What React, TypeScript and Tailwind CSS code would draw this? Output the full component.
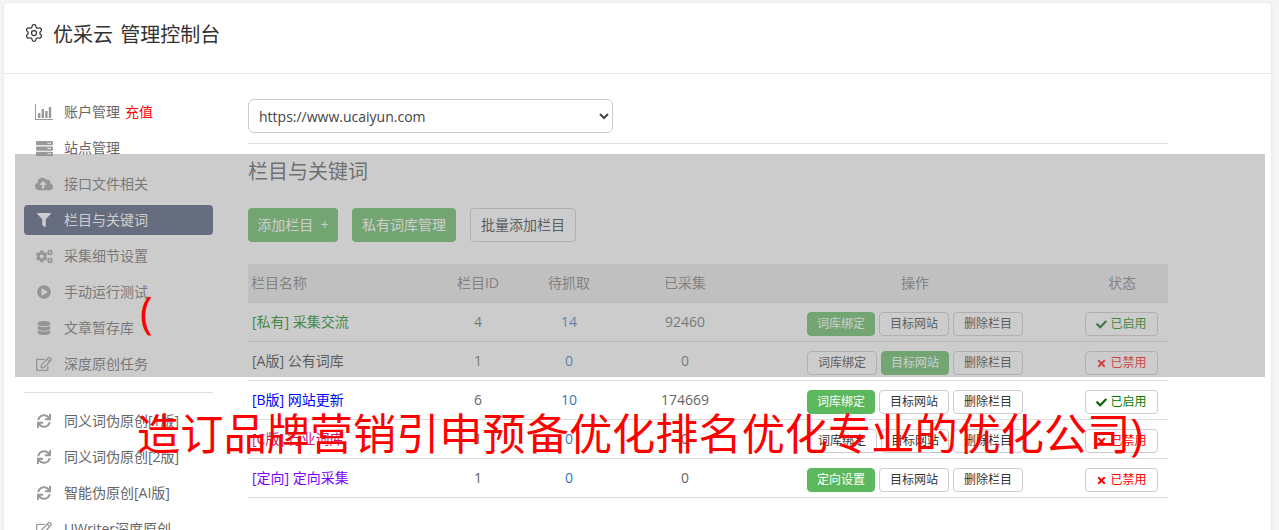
import { Settings } from "lucide-react";
import {
  FaServer, FaCloudUploadAlt, FaFilter, FaCogs, FaPlayCircle,
  FaDatabase, FaRegEdit, FaSync, FaCheck, FaTimes,
} from "react-icons/fa";

const cjk = "font-['Open_Sans','Noto_Sans_CJK_SC',sans-serif]";

function BarChartIcon() {
  return (
    <svg width="18" height="16" viewBox="0 0 18 16" fill="currentColor">
      <path d="M0 0h1v15h17v1H0z" />
      <rect x="3" y="9" width="2.4" height="5" />
      <rect x="6.6" y="5" width="2.4" height="9" />
      <rect x="10.2" y="7" width="2.4" height="7" />
      <rect x="13.8" y="3" width="2.4" height="11" />
    </svg>
  );
}

const NavA = [
  { icon: <BarChartIcon />, label: "账户管理", extra: "充值" },
  { icon: <FaServer className="text-[17px]" />, label: "站点管理" },
  { icon: <FaCloudUploadAlt className="text-[18px]" />, label: "接口文件相关" },
  { icon: <FaFilter className="text-[14px]" />, label: "栏目与关键词", active: true },
  { icon: <FaCogs className="text-[17px]" />, label: "采集细节设置" },
  { icon: <FaPlayCircle className="text-[14px]" />, label: "手动运行测试" },
  { icon: <FaDatabase className="text-[14px]" />, label: "文章暂存库" },
  { icon: <FaRegEdit className="text-[16px]" />, label: "深度原创任务" },
];
const NavB = [
  { icon: <FaSync className="text-[14px]" />, label: "同义词伪原创[1版]" },
  { icon: <FaSync className="text-[14px]" />, label: "同义词伪原创[2版]" },
  { icon: <FaSync className="text-[14px]" />, label: "智能伪原创[AI版]" },
  { icon: <FaRegEdit className="text-[16px]" />, label: "UWriter深度原创" },
];

function NavItem({ icon, label, extra, active }: { icon: React.ReactNode; label: string; extra?: string; active?: boolean }) {
  return (
    <div className={`flex h-[30px] items-center rounded-[4px] text-sm ${active ? "bg-[#43516f] text-white" : "text-[#666]"}`}>
      <span className={`flex w-10 shrink-0 justify-center ${active ? "text-white" : "text-[#999]"}`}>{icon}</span>
      <span>{label}</span>
      {extra && <span className="ml-[5px] text-[#f00]">{extra}</span>}
    </div>
  );
}

function Btn({ children, kind, w }: { children: React.ReactNode; kind: "green" | "plain"; w: string }) {
  return (
    <span className={`flex h-6 items-center justify-center rounded-[4px] border text-[12px] ${w} ${kind === "green" ? "border-[#5cb85c] bg-[#5cb85c] text-white" : "border-[#ccc] bg-white text-[#333]"}`}>
      {children}
    </span>
  );
}

const rows = [
  { tag: "[私有]", name: "采集交流", color: "text-[#008000]", id: "4", wait: "14", done: "92460", first: "词库绑定", mode: "first", on: true },
  { tag: "[A版]", name: "公有词库", color: "text-[#333]", id: "1", wait: "0", done: "0", first: "词库绑定", mode: "second", on: false },
  { tag: "[B版]", name: "网站更新", color: "text-[#0000ff]", id: "6", wait: "10", done: "174669", first: "词库绑定", mode: "first", on: true },
  { tag: "[C版]", name: "行业词库", color: "text-[#c71585]", id: "1", wait: "0", done: "0", first: "词库绑定", mode: "none", on: false },
  { tag: "[定向]", name: "定向采集", color: "text-[#8000ff]", id: "1", wait: "0", done: "0", first: "定向设置", mode: "first", on: false },
];

const cell = "border-b border-[#ddd]";

export default function App() {
  return (
    <div className={`relative h-[530px] w-[1279px] overflow-hidden bg-[#f5f5f5] ${cjk}`}>
      <div className="ml-[4px] mt-[3px] h-[600px] w-[1267px] rounded-t-[4px] bg-white shadow-[0_0_3px_#ddd]">
        <header className="flex h-[71px] items-center border-b border-[#e7e7e7] pb-[10px] pl-5 text-[#333]">
          <Settings size={20} strokeWidth={1.5} className="mr-[9px]" />
          <span className="mt-[3px] text-[20px] leading-[28px] [word-spacing:2px]">优采云 管理控制台</span>
        </header>
        <div className="flex pt-[23px]">
          <aside className="ml-5 w-[189px] shrink-0">
            <div className="flex flex-col gap-[6px]">
              {NavA.map((n) => <NavItem key={n.label} {...n} />)}
            </div>
            <div className="my-[13px] border-t border-[#ddd]" />
            <div className="flex flex-col gap-[6px]">
              {NavB.map((n) => <NavItem key={n.label} {...n} />)}
            </div>
          </aside>
          <main className="ml-[35px] w-[920px] shrink-0 pt-[2px]">
            <select className="block h-[34px] w-[365px] rounded-[6px] border border-[#ccc] bg-white px-[6px] text-sm text-[#444]">
              <option>https://www.ucaiyun.com</option>
            </select>
            <div className="mt-[10px] border-t border-[#ddd]" />
            <h2 className="mt-[14px] text-[20px] leading-[28px] text-[#555]">栏目与关键词</h2>
            <div className="mt-[22px] flex gap-[14px] text-sm">
              <span className="flex h-[34px] w-[90px] items-center justify-center rounded-[4px] bg-[#5cb85c] text-white [word-spacing:4px]">添加栏目 +</span>
              <span className="flex h-[34px] w-[104px] items-center justify-center rounded-[4px] bg-[#5cb85c] text-white">私有词库管理</span>
              <span className="flex h-[34px] w-[106px] items-center justify-center rounded-[4px] border border-[#ccc] text-[#333]">批量添加栏目</span>
            </div>
            <table className="mt-[22px] w-[920px] table-fixed border-separate border-spacing-0 text-sm text-[#666]">
              <thead>
                <tr className="h-[39px] bg-[#e9e9e9] text-[#777]">
                  <th className={`w-[186px] pl-[3px] text-left font-normal ${cell}`}>栏目名称</th>
                  <th className={`w-[88px] font-normal ${cell}`}>栏目ID</th>
                  <th className={`w-[94px] font-normal ${cell}`}>待抓取</th>
                  <th className={`w-[138px] font-normal ${cell}`}>已采集</th>
                  <th className={`w-[322px] font-normal ${cell}`}>操作</th>
                  <th className={`w-[92px] font-normal ${cell}`}>状态</th>
                </tr>
              </thead>
              <tbody>
                {rows.map((r) => (
                  <tr key={r.tag} className="h-[39px]">
                    <td className={`pl-[4px] ${r.color} ${cell}`}>{r.tag} {r.name}</td>
                    <td className={`text-center ${cell}`}>{r.id}</td>
                    <td className={`text-center text-[#337ab7] ${cell}`}>{r.wait}</td>
                    <td className={`text-center ${cell}`}>{r.done}</td>
                    <td className={`pt-[4px] ${cell}`}>
                      <div className="flex justify-center gap-1">
                        <Btn kind={r.mode === "first" ? "green" : "plain"} w={r.mode === "first" ? "w-[68px]" : "w-[70px]"}>{r.first}</Btn>
                        <Btn kind={r.mode === "second" ? "green" : "plain"} w={r.mode === "first" ? "w-[70px]" : "w-[68px]"}>目标网站</Btn>
                        <Btn kind="plain" w="w-[70px]">删除栏目</Btn>
                      </div>
                    </td>
                    <td className={`pt-[4px] ${cell}`}>
                      <div className="flex justify-center pr-[1px]">
                        <span className={`flex h-6 w-[73px] items-center justify-center gap-[3px] rounded-[4px] border border-[#ccc] bg-white text-[12px] ${r.on ? "text-[#008000]" : "text-[#f00]"}`}>
                          {r.on ? <FaCheck className="text-[11px] text-[#006400]" /> : <FaTimes className="text-[11px]" />}
                          {r.on ? "已启用" : "已禁用"}
                        </span>
                      </div>
                    </td>
                  </tr>
                ))}
              </tbody>
            </table>
          </main>
        </div>
      </div>
      <div className="absolute left-[15px] top-[154px] h-[223px] w-[1250px] bg-[#909090]/46" />
      <div className="absolute left-[140px] top-[282px] text-[43px] leading-[60px] text-[#f00]">(</div>
      <div className="absolute left-[137px] top-[404px] whitespace-nowrap text-[43.2px] leading-[60px] text-[#f00]">造订品牌营销引申预备优化排名优化专业的优化公司)</div>
    </div>
  );
}
